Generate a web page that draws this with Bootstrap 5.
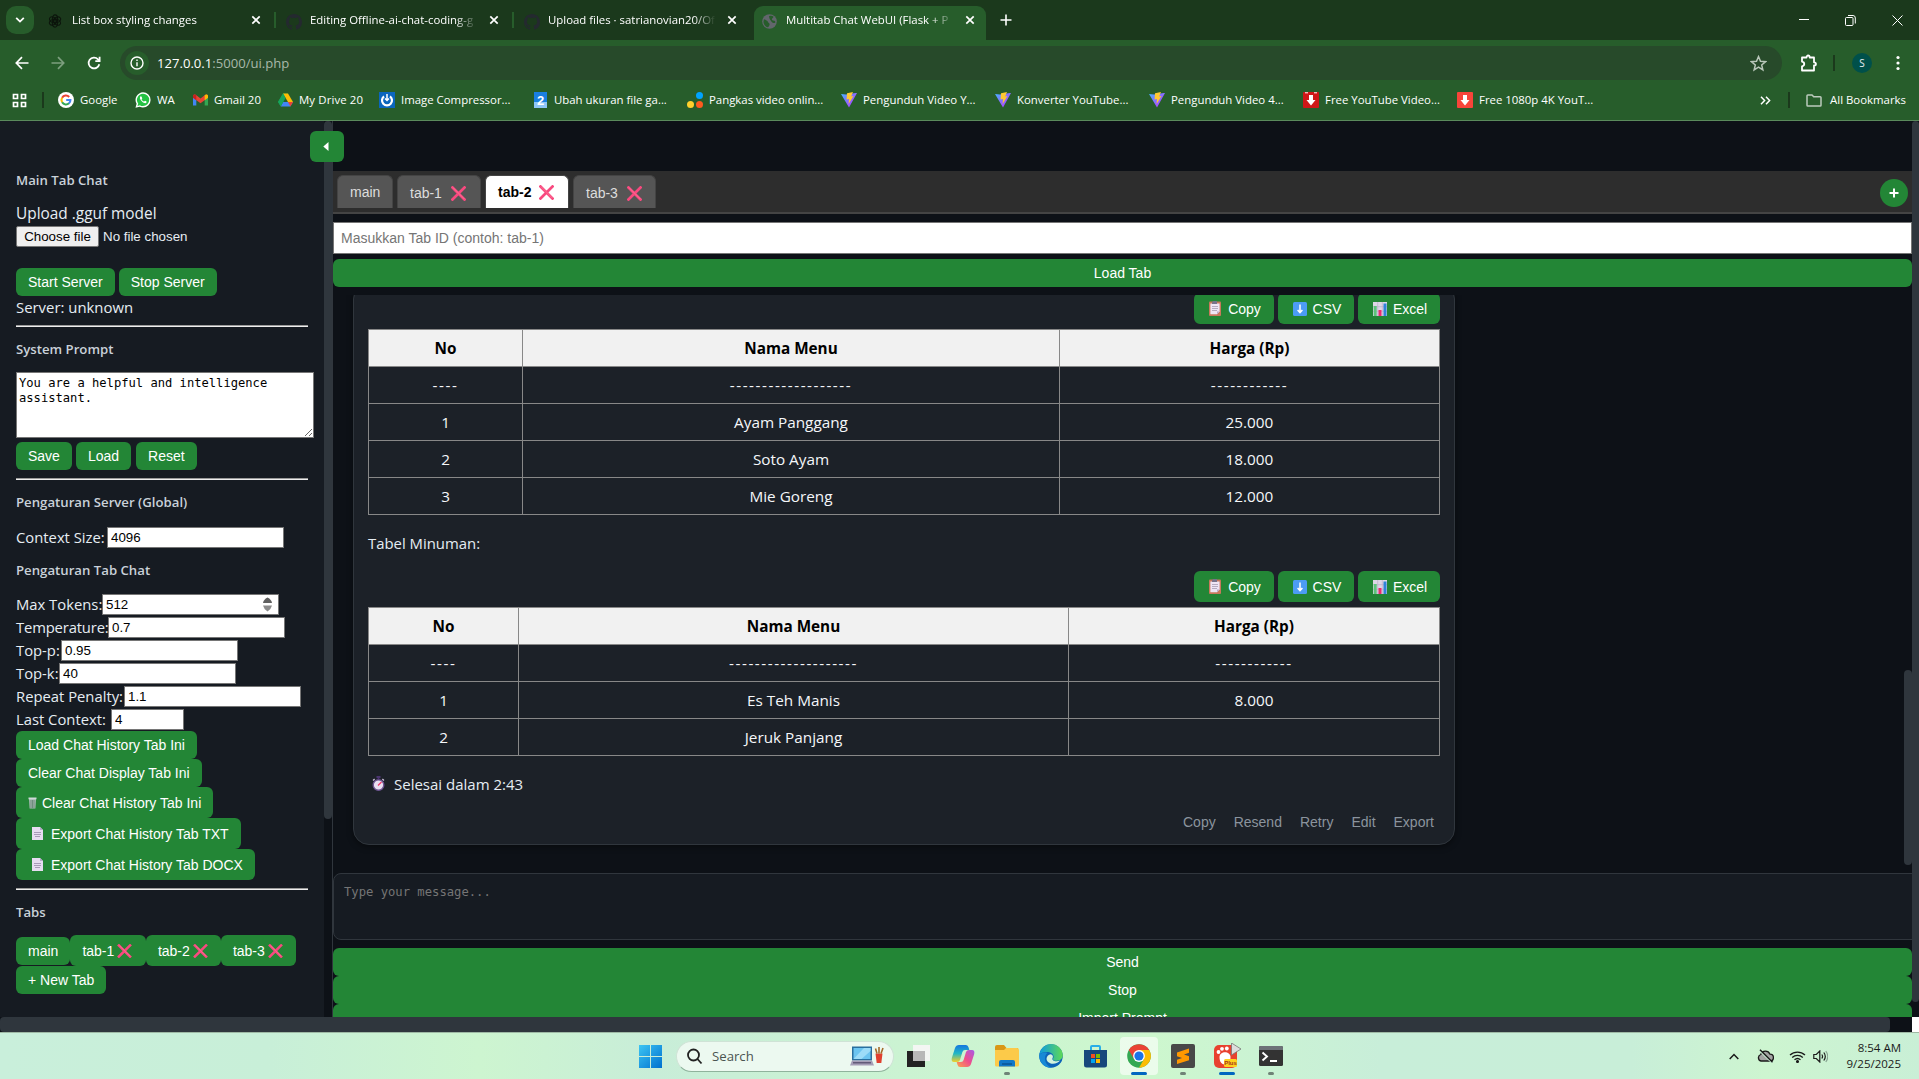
<!DOCTYPE html>
<html lang="id">
<head>
<meta charset="utf-8">
<meta name="viewport" content="width=device-width, initial-scale=1">
<title>Multitab Chat WebUI (Flask + PHP)</title>
<link href="https://cdn.jsdelivr.net/npm/bootstrap@5.3.0/dist/css/bootstrap.min.css" rel="stylesheet">
<style>
body{width:1919px;height:1079px;overflow:hidden;background:#0d1117;color:#e6edf3;font-family:"Open Sans","Noto Sans",sans-serif;font-size:15px;line-height:20px}
svg{display:block;flex:none}
button{font-family:"Liberation Sans",Arial,sans-serif}
/* browser frame */
.strip{height:40px;background:#1b391c;font-size:11.4px;color:#fff;padding-left:6px}
.drop{width:28px;height:28px;margin-top:6px;border-radius:10px;background:#275d2b}
.btab{width:238px;height:34px;margin-top:6px;padding-left:10px;position:relative}
.btab .ttl{width:171px;white-space:nowrap;overflow:hidden;-webkit-mask-image:linear-gradient(90deg,#000 85%,transparent 98%);mask-image:linear-gradient(90deg,#000 85%,transparent 98%)}
.btab .ic{width:16px;margin-right:8px}
.btab.sep:after{content:"";position:absolute;right:0;top:6px;width:2px;height:16px;background:#275d2b}
.btab.on:before{content:"";position:absolute;inset:0 4px 0 2px;background:#275d2b;border-radius:9px 9px 0 0}
.btab.on>*{position:relative}
.toolbar{height:40px;background:#275d2b}
.omni{width:1662px;height:34px;margin-top:6px;border-radius:17px;background:#274a2a;font-size:13.1px;color:#fff;padding:0 15px 0 5px}
.omni i{font-style:normal;color:#a9b9aa}
.info{width:24px;height:24px;border-radius:50%;background:#275d2b}
.marks{height:41px;background:#275d2b;border-bottom:1px solid #5a8a5c;font-size:11.4px;color:#fff;padding-left:12px}
.bm{white-space:nowrap;flex:none}
.bm svg{margin-right:6px}
.vsep{width:2px;height:16px;background:#1b391c}
.ava{width:20px;height:20px;border-radius:50%;background:#00504a;font-size:10px}
/* page */
.pagebox{height:896px;position:relative}
.side{width:324px;background:#161b22;padding:0 16px}
.strack{width:9px;background:#0d1117;border-right:1px solid #30363d}
.thumb{width:8px;background:#2f363d;border-radius:4px}
.gbtn{background:#238636;color:#fff;border:0;border-radius:6px;font-size:14px;line-height:16px;height:28px;padding:0 12px;white-space:nowrap;display:flex;align-items:center;justify-content:center}
.gbtn.tall{height:31px}
.toggle{position:absolute;left:310px;top:10px;width:34px;height:31px;padding:0;z-index:3}
.hd{font-size:13.2px;font-weight:600;color:#c9d1d9;line-height:20px;margin:0}
.rule{height:2px;background:#eee;border-top:1px solid #9a9a9a;width:292px}
.rowf{height:23px;display:flex;align-items:center;white-space:nowrap;font-size:14.8px}
.rowf>span{padding-bottom:2px}
.fld{width:177px;height:21px;border:1px solid #767676;background:#fff;color:#000;font:13.33px "Liberation Sans",Arial,sans-serif;padding:0 3px;border-radius:0;flex:none}
.choose{height:21px;width:83px;border:1px solid #767676;background:#efefef;color:#000;font-size:13.33px;padding:0;border-radius:2px;line-height:17px}
.sys{width:298px;height:66px;font:12.14px/15px "DejaVu Sans Mono",monospace;border:1px solid #767676;padding:3px 2px;background:#fff;color:#000;display:block}
.main{width:1579px;overflow:hidden}
.tbar{height:43px;background:#2d2d2d;border-bottom:2px solid #444;padding:4px 4px 4px;gap:4px}
.ctab{height:33px;background:#555;border:1px solid #444;border-bottom:0;border-radius:6px 6px 0 0;color:#ddd;font:14px "Liberation Sans",Arial,sans-serif;display:flex;align-items:center;padding:2px 12px 0;gap:9px}
.ctab.on{background:#fff;color:#000;font-weight:700;gap:8px}
.add{width:28px;height:28px;border-radius:50%;background:#238636}
.tabid{height:32px;margin-top:8px;border:1px solid #767676;background:#fff;padding:0 7px;font:14px "Liberation Sans",Arial,sans-serif;width:100%;display:block}
.tabid::placeholder{color:#757575}
.chat{height:570px;margin-top:8px;overflow:hidden;padding:0 0 20px 20px}
.msg{width:1102px;height:562px;background:#1c2128;border:1px solid #30363d;border-radius:16px;padding:9px 14px 0;box-shadow:0 2px 6px rgba(0,0,0,.4);flex:none}
.tbl{border-collapse:collapse;width:1072px;table-layout:fixed;text-align:center;margin-top:5px;font-size:15.3px}
.tbl th,.tbl td{border:1px solid #888;height:37px;padding:0;color:#f5f7fa}
.tbl .dash td{letter-spacing:1.52px}
.tbl th{background:#f1f1f1;color:#000;font-weight:700}
.acts{color:#8b949e;font:14px/16px "Liberation Sans",Arial,sans-serif;gap:18px}
.typ{height:67px;width:1590px;margin-top:8px;margin-bottom:8px;border:1px solid #30363d;border-radius:8px;background:#161b22;padding:10px 10px;font:12.2px/16px "DejaVu Sans Mono",monospace;resize:none;display:block}
.typ::placeholder{color:#757575}
.hbar{height:15px;background:#0d1117}
.task{height:47px;border-top:1px solid #9fb9a5;background:linear-gradient(90deg,#c9efdb 0,#c8efd8 14%,#cdf5d0 25%,#c8edd8 34%,#cbf3d2 47%,#cdf7ce 60%,#c8eed9 72%,#c8eed8 85%,#cdf5d0 92%,#c9efd6 100%);font-size:12px;color:#1a1a1a;padding-left:639px}
.srch{width:218px;height:31px;border-radius:16px;background:#ecf9f0;border:1px solid #cfe3d6;border-bottom-color:#8fb39c;font-size:14px;color:#4b5550;padding:0 9px}
.app{width:44px;height:46px;position:relative;display:flex;align-items:center;justify-content:center}
.app.on:before{content:"";position:absolute;inset:4px 3px 4px;border-radius:4px;background:rgba(255,255,255,.6)}
.app svg{position:relative}
.app.run:after{content:"";position:absolute;bottom:4px;left:19px;width:6px;height:3px;border-radius:2px;background:#6f8376}
.app.act:after{content:"";position:absolute;bottom:4px;left:14px;width:16px;height:3px;border-radius:2px;background:#0067c0}
.clock{font-size:11.5px;line-height:16px;text-align:right;width:72px}
</style>
<script src="https://cdn.jsdelivr.net/npm/bootstrap@5.3.0/dist/js/bootstrap.bundle.min.js"></script>
</head>
<body class="d-flex flex-column">
<svg width="0" height="0" class="position-absolute">
<defs>
<symbol id="x" viewBox="0 0 10 10"><path d="M1.3 1.3 8.7 8.7M8.7 1.3 1.3 8.7" stroke="#fff" stroke-width="1.7"/></symbol>
<symbol id="gh" viewBox="0 0 16 16"><path fill="#24292f" d="M8 0C3.58 0 0 3.58 0 8c0 3.54 2.29 6.53 5.47 7.59.4.07.55-.17.55-.38 0-.19-.01-.82-.01-1.49-2.01.37-2.53-.49-2.69-.94-.09-.23-.48-.94-.82-1.13-.28-.15-.68-.52-.01-.53.63-.01 1.08.58 1.23.82.72 1.21 1.87.87 2.33.66.07-.52.28-.87.51-1.07-1.78-.2-3.64-.89-3.64-3.95 0-.87.31-1.59.82-2.15-.08-.2-.36-1.02.08-2.12 0 0 .67-.21 2.2.82a7.6 7.6 0 0 1 4 0c1.53-1.04 2.2-.82 2.2-.82.44 1.1.16 1.92.08 2.12.51.56.82 1.27.82 2.15 0 3.07-1.87 3.75-3.65 3.95.29.25.54.73.54 1.48 0 1.07-.01 1.93-.01 2.2 0 .21.15.46.55.38A8 8 0 0 0 16 8c0-4.42-3.58-8-8-8"/></symbol>
<symbol id="cross" viewBox="0 0 15 15"><path d="M1.5 1.5 13.5 13.5M13.5 1.5 1.5 13.5" stroke="#f8497f" stroke-width="2.700" stroke-linecap="square"/><path d="M2 1.6 13.4 13" stroke="#ff6f93" stroke-width="1"/></symbol>
<linearGradient id="vg" x1="0" y1="0" x2="1" y2="1"><stop offset="0" stop-color="#41b8ff"/><stop offset=".5" stop-color="#8a6bff"/><stop offset="1" stop-color="#bd34fe"/></linearGradient>
<symbol id="vite" viewBox="0 0 16 16"><path d="M0 2 5 2.6 14.8.9 16 1 8 15.6Z" fill="url(#vg)"/><path d="M6 1.2 12 0 10.2 4.4 12.5 4 7.6 12 8 7 5.6 7.4Z" fill="#ffc832"/></symbol>
<symbol id="doc" viewBox="0 0 13 15"><path d="M1 1h8l3 3v10H1z" fill="#e6dcf1"/><path d="M9 1v3h3z" fill="#b8a8c9"/><path d="M3 6.5h7M3 8.5h7M4 10.5h5" stroke="#a79ab8"/></symbol>
<symbol id="clip" viewBox="0 0 12 15"><rect width="12" height="14.5" y=".5" rx="1" fill="#c9785c"/><path d="M1.4 2.5h9.2v8L8 13.2H1.4z" fill="#eee6f5"/><path d="M4 0h4v3H3V1.5z" fill="#77738a"/><path d="M3 5.5h6M3 7.5h6M3 9.5h5" stroke="#a79db3" stroke-width=".8"/><path d="M8 13.2v-2.7h2.6z" fill="#bcabc9"/></symbol>
<symbol id="dn" viewBox="0 0 14 14"><rect width="14" height="14" rx="1.5" fill="#4c9cf5"/><path d="M7 2.5v8M4.6 8 7 10.600 9.400 8" stroke="#fff" stroke-width="1.500" fill="none"/></symbol>
<symbol id="bars" viewBox="0 0 14 14"><rect width="14" height="14" fill="#ddd7e6"/><path d="M4.7 0v14M9.3 0v14M0 4.7h14M0 9.3h14" stroke="#b7aac6" stroke-width=".6"/><path d="M.7 4h3v10h-3z" fill="#5cc479"/><path d="M5.5 8h3v6h-3z" fill="#ee2a70"/><path d="M10.5 1.5h3V14h-3z" fill="#2f83d9"/></symbol>
</defs></svg>

<header>
<div class="strip d-flex">
 <div class="drop d-flex align-items-center justify-content-center"><svg width="10" height="8" viewBox="0 0 10 8"><path d="M1.2 1.8 5 5.6 8.8 1.8" fill="none" stroke="#fff" stroke-width="1.8"/></svg></div>
 <div style="width:4px"></div>
 <div class="btab sep d-flex pb-2 pt-1"><span class="ic pt-1"><svg width="14" height="14" viewBox="0 0 16 16" fill="none" stroke="#0c150c" stroke-width="1.2"><ellipse cx="8" cy="5.3" rx="3" ry="4.3"/><ellipse cx="8" cy="5.3" rx="3" ry="4.3" transform="rotate(60 8 8)"/><ellipse cx="8" cy="5.3" rx="3" ry="4.3" transform="rotate(120 8 8)"/><ellipse cx="8" cy="5.3" rx="3" ry="4.3" transform="rotate(180 8 8)"/><ellipse cx="8" cy="5.3" rx="3" ry="4.3" transform="rotate(240 8 8)"/><ellipse cx="8" cy="5.3" rx="3" ry="4.3" transform="rotate(300 8 8)"/></svg></span><span class="ttl">List box styling changes</span><svg class="ms-2 mt-1" width="10" height="12"><use href="#x"/></svg></div>
 <div class="btab sep d-flex pb-2 pt-1"><span class="ic pt-1"><svg width="16" height="16"><use href="#gh"/></svg></span><span class="ttl">Editing Offline-ai-chat-coding-g</span><svg class="ms-2 mt-1" width="10" height="12"><use href="#x"/></svg></div>
 <div class="btab d-flex pb-2 pt-1"><span class="ic pt-1"><svg width="16" height="16"><use href="#gh"/></svg></span><span class="ttl">Upload files · satrianovian20/Of</span><svg class="ms-2 mt-1" width="10" height="12"><use href="#x"/></svg></div>
 <div class="btab on d-flex pb-2 pt-1"><span class="ic pt-1"><svg width="15" height="15" viewBox="0 0 15 15"><circle cx="7.5" cy="7.5" r="7.3" fill="#62666c"/><path d="M2 5.2C4 6 5.5 6.5 6 8c.4 1.2 2 1 1.6 2.6C7.300 12 6.500 13.500 5.500 13.300 3.400 12.600 1.200 10 1.500 7.300ZM7 2.200c1.500-.6 3.500-.5 4.500.6-.2 1.500-1.300 1.300-1.600 2.300-.3 1.100 1 1.700 2.500 1.600.8.300 1 1 .9 1.800-1.400.9-3.300.6-3.900-.9C9 6.500 7.300 5.500 7 2.200Z" fill="#275d2b"/></svg></span><span class="ttl">Multitab Chat WebUI (Flask + P</span><svg class="ms-2 mt-1" width="10" height="12"><use href="#x"/></svg></div>
 <div class="d-flex align-items-center" style="padding-left:10px"><svg width="12" height="12" viewBox="0 0 12 12"><path d="M6 .5v11M.5 6h11" stroke="#fff" stroke-width="1.6"/></svg></div>
 <div class="d-flex align-items-center ms-auto" style="gap:36px;padding-right:16px">
  <svg width="10" height="10"><path d="M0 4.500h10" stroke="#fff"/></svg>
  <svg width="11" height="11" viewBox="0 0 11 11" fill="none" stroke="#fff"><rect x=".5" y="2.500" width="7.500" height="8" rx="1"/><path d="M3 .5h5A2.400 2.400 0 0 1 10.300 3v5.500"/></svg>
  <svg width="11" height="11"><path d="m.5.5 10 10m0-10-10 10" stroke="#fff"/></svg>
 </div>
</div>
<div class="toolbar d-flex align-items-start">
 <div class="d-flex align-items-center" style="height:46px;width:120px;padding-left:15px;gap:22px">
  <svg width="14" height="14" viewBox="0 0 14 14" fill="none" stroke="#fff" stroke-width="1.700"><path d="M13.500 7H1.500M7 1.200 1.300 7 7 12.800"/></svg>
  <svg width="14" height="14" viewBox="0 0 14 14" fill="none" stroke="#7d9f7f" stroke-width="1.700"><path d="M.5 7h12M7 1.200 12.700 7 7 12.800"/></svg>
  <svg width="14" height="14" viewBox="0 0 14 14" fill="none" stroke="#fff" stroke-width="1.800"><path d="M12.300 8.200A5.400 5.400 0 1 1 11 3.300l1.500 1.700"/><path d="M12.600.8v4.400H8.300"/></svg>
 </div>
 <div class="omni d-flex align-items-center">
  <span class="info d-flex align-items-center justify-content-center"><svg width="14" height="14" viewBox="0 0 14 14" fill="none" stroke="#fff" stroke-width="1.400"><circle cx="7" cy="7" r="6"/><path d="M7 6.200v4M7 3.500v1.500"/></svg></span>
  <span class="ms-2">127.0.0.1<i>:5000/ui.php</i></span>
  <svg class="ms-auto" width="17" height="17" viewBox="0 0 16 16" fill="none" stroke="#b9c7ba" stroke-width="1.400"><path d="m8 1.500 1.900 4.400 4.700.4-3.600 3.100 1.100 4.600L8 11.500 3.900 14 5 9.400 1.400 6.300l4.700-.4z"/></svg>
 </div>
 <div class="d-flex align-items-center flex-fill" style="height:46px;padding-left:18px">
  <svg width="18" height="18" viewBox="0 0 18 18" fill="none" stroke="#fff" stroke-width="1.800"><path d="M2 3.500h4.500c0-2.700 3.200-2.700 3.200 0H14v4.800c2.600 0 2.600 3.200 0 3.200v5H2v-4.200c3-.6 3-4 0-4.600z" stroke-linejoin="round"/></svg>
  <span class="vsep" style="margin-left:15px"></span>
  <span class="ava d-flex align-items-center justify-content-center" style="margin-left:17px">S</span>
  <svg style="margin-left:24px" width="4" height="16" fill="#fff"><circle cx="2" cy="2.500" r="1.600"/><circle cx="2" cy="8" r="1.600"/><circle cx="2" cy="13.500" r="1.600"/></svg>
 </div>
</div>
<div class="marks d-flex align-items-center">
 <svg width="15" height="15" viewBox="0 0 15 15" fill="none" stroke="#fff" stroke-width="1.700"><path d="M1.500 1.500h4v4h-4zM9.500 1.500h4v4h-4zM1.500 9.500h4v4h-4zM9.500 9.500h4v4h-4z"/></svg>
 <span class="vsep" style="margin:0 14px 0 15px"></span>
 <div class="bm d-flex align-items-center" style="width:77px"><svg width="16" height="16" viewBox="0 0 16 16"><circle cx="8" cy="8" r="8" fill="#fff"/><g fill="none" stroke-width="2.100"><path d="M4.100 5.700A4.500 4.500 0 0 1 11.200 4.900" stroke="#ea4335"/><path d="M4.100 10.300a4.600 4.600 0 0 1 0-4.600" stroke="#fbbc05"/><path d="M11 11.300a4.500 4.500 0 0 1-6.900-1" stroke="#34a853"/><path d="M8.200 8h4.200a4.400 4.400 0 0 1-1.500 3.400" stroke="#4285f4"/></g></svg>Google</div>
 <div class="bm d-flex align-items-center" style="width:58px"><svg width="16" height="16" viewBox="0 0 16 16"><path d="M8 .3A7.600 7.600 0 0 1 8 15.500 8 8 0 0 1 4.600 14.800L.5 15.800l1.100-4A7.600 7.600 0 0 1 8 .3Z" fill="#fff"/><path d="M8 1.700a6.200 6.200 0 0 1 0 12.400c-1.200 0-2.200-.3-3.100-.9l-2.400.7.700-2.300A6.200 6.200 0 0 1 8 1.700Z" fill="#25c244"/><path d="M5.700 4.300c-1.800 1.500-.2 3.700 1.300 5.200s3.700 2.500 4.500 1c.5-1-.9-1.400-1.500-1.700l-.9.800C8 9.200 7 8.200 6.600 7.200l.7-.8c-.3-.9-.7-2.300-1.600-2.100Z" fill="#fff"/></svg>WA</div>
 <div class="bm d-flex align-items-center" style="width:85px"><svg width="15" height="12" viewBox="0 0 15 12"><path d="M0 2v9.500h3.300V5z" fill="#4285f4"/><path d="M15 2v9.500h-3.300V5z" fill="#34a853"/><path d="M0 2C0 .5 1.700 0 2.700.8L7.500 4.600 12.300.8C13.300 0 15 .5 15 2v1.800L7.500 9.300 0 3.800z" fill="#ea4335"/><path d="M11.700 1.300C13 0 15 .5 15 2v1.800l-3.300 2.400z" fill="#fbbc04"/><path d="M3.300 1.300C2 0 0 .5 0 2v1.800l3.300 2.400z" fill="#c5221f"/></svg>Gmail 20</div>
 <div class="bm d-flex align-items-center" style="width:101px;letter-spacing:.12px"><svg width="15" height="14" viewBox="0 0 15 14"><path d="M5 .5h5L5.200 9 2.700 13 0 9z" fill="#0f9d58"/><path d="M5 .5h5L15 9h-5z" fill="#fbbc04"/><path d="M5.200 9H15l-2.600 4.500H2.700z" fill="#4285f4"/><path d="M5 .5 7.500 4.800 2.700 13.400 0 9z" fill="#17a55b"/><path d="M10 9h5l-2.600 4.500z" fill="#ea4335"/></svg>My Drive 20</div>
 <div class="bm d-flex align-items-center" style="width:154px"><svg width="16" height="16" viewBox="0 0 16 16"><rect width="16" height="16" fill="#0b66bd"/><path d="M5 4.400a5 5 0 1 0 6 0" fill="none" stroke="#fff" stroke-width="2.200"/><path d="M8 2v6M6 6.400 8 8.500l2-2.100" stroke="#fff" stroke-width="1.500" fill="none"/></svg>Image Compressor...</div>
 <div class="bm d-flex align-items-center" style="width:154px;padding-left:1px"><svg style="margin-right:7px" width="13" height="16" viewBox="0 0 13 16"><rect width="13" height="16" fill="#1a7fe0"/><rect y="10" width="13" height="6" fill="#8fc6f7"/><text x="6.500" y="13" font-size="13" font-weight="700" text-anchor="middle" fill="#fff" font-family="Liberation Sans,sans-serif">2</text></svg>Ubah ukuran file ga...</div>
 <div class="bm d-flex align-items-center" style="width:154px"><svg width="16" height="16" viewBox="0 0 16 16"><circle cx="12.500" cy="3.500" r="3.500" fill="#00a3ff"/><circle cx="3.500" cy="12.500" r="3.500" fill="#ffd02c"/><circle cx="12.500" cy="12.500" r="3.500" fill="#ff5a1f"/></svg>Pangkas video onlin...</div>
 <div class="bm d-flex align-items-center" style="width:154px"><svg width="16" height="16"><use href="#vite"/></svg>Pengunduh Video Y...</div>
 <div class="bm d-flex align-items-center" style="width:154px"><svg width="16" height="16"><use href="#vite"/></svg>Konverter YouTube...</div>
 <div class="bm d-flex align-items-center" style="width:154px"><svg width="16" height="16"><use href="#vite"/></svg>Pengunduh Video 4...</div>
 <div class="bm d-flex align-items-center" style="width:154px"><svg width="16" height="16" viewBox="0 0 16 16"><rect width="16" height="16" rx="1" fill="#cf1717"/><path d="M2 .8h3M11 .8h3" stroke="#fff"/><path d="M6 3h4v5h2.500L8 13.500 3.500 8H6z" fill="#fff"/></svg>Free YouTube Video...</div>
 <div class="bm d-flex align-items-center" style="width:154px"><svg width="16" height="16" viewBox="0 0 16 16"><rect width="16" height="16" rx="1" fill="#f8443a"/><path d="M6 3h4v5h2.500L8 13.500 3.500 8H6z" fill="#fff"/></svg>Free 1080p 4K YouT...</div>
 <div class="d-flex align-items-center ms-auto" style="padding-right:13px"><svg width="11" height="9" viewBox="0 0 11 9" fill="none" stroke="#fff" stroke-width="1.500"><path d="m1 .8 3.600 3.700L1 8.200M6 .8l3.600 3.700L6 8.200"/></svg><span class="vsep" style="margin:0 16px 0 17px"></span><svg style="margin-right:8px" width="16" height="13" viewBox="0 0 16 13"><path d="M1 11.200V1.800q0-.8.8-.8H6l1.700 1.800h6.500q.8 0 .8.800v7.600q0 .8-.8.8H1.800q-.8 0-.8-.8Z" fill="none" stroke="#bccabd" stroke-width="1.500"/></svg><span>All Bookmarks</span></div>
</div>
</header>

<div class="pagebox d-flex">
 <button class="gbtn toggle"><svg style="margin-right:2px" width="6" height="9"><path d="M5.500 0v9L.3 4.500z" fill="#fff"/></svg></button>
 <aside class="side flex-shrink-0">
  <h6 class="hd" style="padding-top:49px">Main Tab Chat</h6>
  <div style="margin-top:14px;height:22px;line-height:20px;font-size:15.4px">Upload .gguf model</div>
  <div class="d-flex align-items-center"><button class="choose">Choose file</button><span class="ms-1" style="font:13.33px 'Liberation Sans'">No file chosen</span></div>
  <div class="d-flex" style="gap:4px;margin-top:21px"><button class="gbtn">Start Server</button><button class="gbtn">Stop Server</button></div>
  <div style="height:29px;line-height:23px;font-size:14.9px">Server: unknown</div>
  <div class="rule"></div>
  <h6 class="hd" style="margin-top:12px;margin-bottom:13px">System Prompt</h6>
  <textarea class="sys" spellcheck="false">You are a helpful and intelligence assistant.</textarea>
  <div class="d-flex" style="gap:4px;margin-top:4px;margin-bottom:8px"><button class="gbtn">Save</button><button class="gbtn">Load</button><button class="gbtn" style="margin-left:1px">Reset</button></div>
  <div class="rule"></div>
  <h6 class="hd" style="margin-top:12px;margin-bottom:14px">Pengaturan Server (Global)</h6>
  <div class="rowf"><span style="width:91px">Context Size:</span><input class="fld" value="4096"></div>
  <h6 class="hd" style="margin-top:11px;margin-bottom:13px">Pengaturan Tab Chat</h6>
  <div class="rowf"><span style="width:86px">Max Tokens:</span><input class="fld" value="512"><svg style="margin-left:-16px" width="9" height="15"><path d="M0 6Q.5 2.500 4.500.5 8.500 2.500 9 6z" fill="#606060"/><path d="M0 8.500h9Q8 12.500 4.500 14.500 1 12.500 0 8.500z" fill="#8b8b8b"/></svg></div>
  <div class="rowf"><span style="width:92px;letter-spacing:-.15px">Temperature:</span><input class="fld" value="0.7"></div>
  <div class="rowf"><span style="width:45px">Top-p:</span><input class="fld" value="0.95"></div>
  <div class="rowf"><span style="width:43px">Top-k:</span><input class="fld" value="40"></div>
  <div class="rowf"><span style="width:108px">Repeat Penalty:</span><input class="fld" value="1.1"></div>
  <div class="rowf"><span style="width:95px">Last Context:</span><input class="fld" style="width:73px" value="4"></div>
  <div class="d-flex flex-column align-items-start" style="margin-bottom:8px">
   <button class="gbtn">Load Chat History Tab Ini</button>
   <button class="gbtn">Clear Chat Display Tab Ini</button>
   <button class="gbtn tall"><svg style="margin-right:5px" width="9" height="13" viewBox="0 0 9 13"><path d="M1 3h7l-.6 9.500H1.600z" fill="#a9b9b5"/><path d="M.5 1.500h8v1.800h-8z" fill="#cfd9d8"/><path d="M3 4v8M4.500 4v8M6 4v8" stroke="#567a66" stroke-width=".7"/></svg>Clear Chat History Tab Ini</button>
   <button class="gbtn tall"><svg style="margin:0 7px 0 3px" width="13" height="15"><use href="#doc"/></svg>Export Chat History Tab TXT</button>
   <button class="gbtn tall"><svg style="margin:0 7px 0 3px" width="13" height="15"><use href="#doc"/></svg>Export Chat History Tab DOCX</button>
  </div>
  <div class="rule"></div>
  <h6 class="hd" style="margin-top:12px;margin-bottom:13px">Tabs</h6>
  <div class="d-flex align-items-center"><button class="gbtn">main</button><button class="gbtn tall" style="width:76px">tab-1<svg style="margin:0 2px 0 3px" width="15" height="14"><use href="#cross"/></svg></button><button class="gbtn tall" style="width:75px">tab-2<svg style="margin:0 2px 0 3px" width="15" height="14"><use href="#cross"/></svg></button><button class="gbtn tall" style="width:75px">tab-3<svg style="margin:0 2px 0 3px" width="15" height="14"><use href="#cross"/></svg></button></div>
  <button class="gbtn">+ New Tab</button>
 </aside>
 <div class="strack flex-shrink-0"><div class="thumb" style="height:698px"></div></div>
 <main class="main flex-shrink-0">
  <div style="height:50px"></div>
  <div class="tbar d-flex align-items-start">
   <div class="ctab pt-0" style="width:56px">main</div>
   <div class="ctab" style="width:84px">tab-1 <svg width="15" height="15"><use href="#cross"/></svg></div>
   <div class="ctab on pt-0" style="width:84px">tab-2 <svg width="15" height="15"><use href="#cross"/></svg></div>
   <div class="ctab" style="width:83px">tab-3 <svg width="15" height="15"><use href="#cross"/></svg></div>
   <div class="add ms-auto d-flex align-items-center justify-content-center mt-1"><svg width="10" height="10"><path d="M5 .5v9M.5 5h9" stroke="#fff" stroke-width="2"/></svg></div>
  </div>
  <input class="tabid" placeholder="Masukkan Tab ID (contoh: tab-1)">
  <button class="gbtn w-100" style="margin-top:5px">Load Tab</button>
  <div class="d-flex">
   <section class="chat flex-fill d-flex flex-column justify-content-end">
    <article class="msg">
     <div class="d-flex justify-content-end" style="gap:4px">
      <button class="gbtn tall" style="width:80px"><svg style="margin:0 7px 0 2px" width="12" height="15"><use href="#clip"/></svg>Copy</button><button class="gbtn tall" style="width:76px"><svg style="margin:0 6px 0 2px" width="14" height="14"><use href="#dn"/></svg>CSV</button><button class="gbtn tall" style="width:82px"><svg style="margin:0 6px 0 2px" width="14" height="14"><use href="#bars"/></svg>Excel</button>
     </div>
     <table class="tbl"><colgroup><col style="width:154px"><col style="width:537px"><col></colgroup>
      <tr><th>No</th><th>Nama Menu</th><th>Harga (Rp)</th></tr>
      <tr class="dash"><td>----</td><td>-------------------</td><td>------------</td></tr>
      <tr><td>1</td><td>Ayam Panggang</td><td>25.000</td></tr>
      <tr><td>2</td><td>Soto Ayam</td><td>18.000</td></tr>
      <tr><td>3</td><td>Mie Goreng</td><td>12.000</td></tr>
     </table>
     <div style="margin-top:18px;margin-bottom:18px;font-size:14.9px">Tabel Minuman:</div>
     <div class="d-flex justify-content-end" style="gap:4px">
      <button class="gbtn tall" style="width:80px"><svg style="margin:0 7px 0 2px" width="12" height="15"><use href="#clip"/></svg>Copy</button><button class="gbtn tall" style="width:76px"><svg style="margin:0 6px 0 2px" width="14" height="14"><use href="#dn"/></svg>CSV</button><button class="gbtn tall" style="width:82px"><svg style="margin:0 6px 0 2px" width="14" height="14"><use href="#bars"/></svg>Excel</button>
     </div>
     <table class="tbl"><colgroup><col style="width:150px"><col style="width:550px"><col></colgroup>
      <tr><th>No</th><th>Nama Menu</th><th>Harga (Rp)</th></tr>
      <tr class="dash"><td>----</td><td>--------------------</td><td>------------</td></tr>
      <tr><td>1</td><td>Es Teh Manis</td><td>8.000</td></tr>
      <tr><td>2</td><td>Jeruk Panjang</td><td></td></tr>
     </table>
     <div class="d-flex align-items-center" style="margin-top:18px;padding-left:4px"><svg style="margin-right:9px" width="13" height="16" viewBox="0 0 13 16"><circle cx="6.500" cy="9" r="5.300" fill="#e9e0f2" stroke="#6c5390" stroke-width="1.400"/><path d="M4.500 1h4M6.500 1v2.500" stroke="#4b3570" stroke-width="1.800"/><path d="M1 4.500 2.600 3M12 4.500 10.400 3" stroke="#cfc2de" stroke-width="1.200"/><path d="m6 9.500 3.500-3.500" stroke="#f4366b" stroke-width="1.300"/></svg>Selesai dalam 2:43</div>
     <div class="acts d-flex justify-content-end" style="margin-top:20px;padding-right:6px"><span>Copy</span><span>Resend</span><span>Retry</span><span>Edit</span><span>Export</span></div>
    </article>
   </section>
   <div style="padding-top:383px"><div class="thumb" style="height:195px"></div></div>
  </div>
  <textarea class="typ" placeholder="Type your message..."></textarea>
  <button class="gbtn w-100">Send</button>
  <button class="gbtn w-100">Stop</button>
  <button class="gbtn w-100">Import Prompt</button>
 </main>
 <div style="width:7px"><div class="thumb w-100" style="height:881px"></div></div>
</div>
<div class="hbar d-flex position-relative"><div style="width:1890px;background:#2f363d;border-radius:4px"></div><div class="ms-auto bg-white" style="width:7px"></div></div>

<footer class="task d-flex align-items-center">
 <svg width="23" height="23"><defs><linearGradient id="wg" x1="0" y1="0" x2="1" y2="1"><stop offset="0" stop-color="#3cc5f3"/><stop offset="1" stop-color="#0070cf"/></linearGradient></defs><path d="M0 0h11v11H0zM12 0h11v11H12zM0 12h11v11H0zM12 12h11v11H12z" fill="url(#wg)"/></svg>
 <div class="srch d-flex align-items-center" style="margin:0 3px 0 14px"><svg width="17" height="17" viewBox="0 0 17 17" fill="none" stroke="#222" stroke-width="1.800"><circle cx="7.500" cy="7" r="5.500"/><path d="m11.500 11 4 4.500"/></svg><span style="margin-left:9px;font-size:13.2px">Search</span>
  <svg class="ms-auto" width="34" height="22" viewBox="0 0 34 22"><path d="M2 1.500h20v14H2z" fill="#2a6f9f"/><path d="M3.500 3h17v11h-17z" fill="#6cc4f0"/><path d="M3.500 14 14 3h6.500v3l-9 8z" fill="#9ddcf8"/><path d="M2 15.500h20l2 5H0z" fill="#a59eb6"/><path d="M3 17h18v1.500H3z" fill="#625b78"/><path d="M25.500 8.500h7l-1.200 9.500h-4.600z" fill="#e0402f"/><path d="m27 8.500-1.500-5M29 8.500V2M31 8.500 33 3" stroke="#a46a2a" stroke-width="1.600"/></svg></div>
 <div class="app"><svg width="24" height="22"><path d="M0 6h18v16H0z" fill="#222"/><path d="M6 0h17v16H6z" fill="#f5f5f5" opacity=".93"/><path d="M6 6h12v10H6z" fill="#b8b8b8"/></svg></div>
 <div class="app"><svg width="24" height="22" viewBox="0 0 24 22"><defs><linearGradient id="c1" x1="0" y1="0" x2="0" y2="1"><stop offset="0" stop-color="#1476e0"/><stop offset=".5" stop-color="#22b7c4"/><stop offset="1" stop-color="#f2cf2a"/></linearGradient><linearGradient id="c2" x1="1" y1="0" x2="0" y2="1"><stop offset="0" stop-color="#a65ae8"/><stop offset=".5" stop-color="#ef4e8b"/><stop offset="1" stop-color="#fca34b"/></linearGradient></defs><path d="M8 0h7q2 0 2.600 2.500L18.300 5H14q-2 0-2.600 2L9 15q-.7 2-3 2H3Q0 17 .8 13L4 3q1-3 4-3z" fill="url(#c1)"/><path d="M16 22H9q-2 0-2.600-2.500L5.700 17H10q2 0 2.600-2L15 7q.7-2 3-2h3q3 0 2.200 4L20 19q-1 3-4 3z" fill="url(#c2)"/></svg></div>
 <div class="app run"><svg width="24" height="22"><path d="M0 2Q0 0 2 0h7l2.500 3H23v5H0z" fill="#d99715"/><path d="M0 5h9l2-2h11q2 0 2 2v15q0 1.500-1.500 1.500h-21Q0 21.500 0 20z" fill="#fcca49"/><path d="M4 21.500V17q0-2 2-2h12q2 0 2 2v4.500z" fill="#1278c8"/><path d="M7 19h10" stroke="#0b5596" stroke-width="1.500"/></svg></div>
 <div class="app"><svg width="24" height="24" viewBox="0 0 24 24"><defs><linearGradient id="e1" x1="0" y1="0" x2="1" y2="0"><stop offset="0" stop-color="#0c9ae0"/><stop offset="1" stop-color="#5fda55"/></linearGradient></defs><circle cx="12" cy="12" r="11.800" fill="#0d63b8"/><path d="M.3 10.500A11.800 11.800 0 0 1 23.800 11c.2 4-3 6-6.500 5.800-2.600-.2-4-1.400-3-2.800C15.500 12 13.500 8.500 9.500 8 5 7.500 1.500 9 .3 10.500Z" fill="url(#e1)"/><path d="M7.500 15c0-2.500 2-4.500 4-4.800 2.300.3 3 2.300 2 4-1 2 2.500 4 7.500 2.300-2 3.500-12 5.500-13.500-1.500Z" fill="#d2f3dd"/><path d="M8.500 9C4 12 5.500 21.500 13 23.700 5 24.500 0 18 .3 11.500 1.500 9 5 8 8.500 9Z" fill="#1789d6"/></svg></div>
 <div class="app"><svg width="23" height="23"><path d="M7 5V2q0-1 1-1h7q1 0 1 1v3" fill="none" stroke="#27aee8" stroke-width="2"/><path d="M0 5h23v15q0 2.500-2.500 2.500h-18Q0 22.500 0 20z" fill="#17477c"/><path d="M7 9h4v4H7z" fill="#f25022"/><path d="M12 9h4v4h-4z" fill="#7fba00"/><path d="M7 14h4v4H7z" fill="#00a4ef"/><path d="M12 14h4v4h-4z" fill="#ffb900"/></svg></div>
 <div class="app on act"><svg width="24" height="24" viewBox="0 0 24 24"><circle cx="12" cy="12" r="11.800" fill="#34a853"/><path d="M12 12 1.800 6A11.800 11.800 0 0 1 22.200 6z" fill="#ea4335"/><path d="M12 6h10.200A11.800 11.800 0 0 1 12 23.800L17 15z" fill="#fbbc04"/><path d="M1.800 6 7 15l5-3-2-6z" fill="#ea4335"/><circle cx="12" cy="12" r="5.900" fill="#fff"/><circle cx="12" cy="12" r="4.600" fill="#1a73e8"/></svg></div>
 <div class="app run"><svg width="24" height="24"><rect width="24" height="24" rx="2" fill="#484848"/><path d="M6 8.500 18 4.500v4.300l-5 1.700 5 1.700v4L6 20v-4.300l5-1.700-5-1.700z" fill="#ff9800"/></svg></div>
 <div class="app act"><svg width="28" height="26" viewBox="0 0 28 26"><rect x="1" y="2" width="23" height="23" rx="5" fill="#e8412f"/><circle cx="5.500" cy="9" r="1.900" fill="#fff"/><circle cx="9" cy="5.800" r="1.900" fill="#fff"/><circle cx="13.800" cy="5.500" r="1.900" fill="#fff"/><path d="M6.500 14c0-6.500 11-6.500 11 0s-2 7.500-5 7.500-6-1.500-6-7.500Z" fill="#fff"/><rect x="11" y="16" width="13" height="8" rx="1.500" fill="#ffd21e"/><text x="17.500" y="22.400" font-size="6" font-weight="700" text-anchor="middle" fill="#a3361d" font-family="Liberation Sans,sans-serif">Plus</text><path d="m18.500 0 9.500 6-9.500 6z" fill="#ddd" stroke="#777" stroke-width=".8"/></svg></div>
 <div class="app run"><svg width="24" height="20"><rect width="24" height="20" rx="1.500" fill="#333"/><path d="M0 1.500Q0 0 1.500 0h21Q24 0 24 1.500V4H0z" fill="#6d7278"/><path d="m3.500 6.500 4.500 4-4.500 4M11 15h7" fill="none" stroke="#fff" stroke-width="1.900"/></svg></div>
 <div class="d-flex align-items-center ms-auto" style="padding-right:18px">
  <svg width="10" height="7"><path d="m.7 6 4.300-4.500L9.300 6" fill="none" stroke="#1a1a1a" stroke-width="1.500"/></svg>
  <svg style="margin-left:18px" width="17" height="14" viewBox="0 0 17 14"><path d="M4 12a3.400 3.400 0 0 1-.3-6.500A5 5 0 0 1 13 5.200 3.400 3.400 0 0 1 13 12z" fill="#a3a3a3" stroke="#1a1a1a" stroke-width="1.300"/><path d="m2.500 1.800 13 12.400" stroke="#c9efd6" stroke-width="1.500"/><path d="m3 .8 12.500 12.400" stroke="#1a1a1a" stroke-width="1.400"/></svg>
  <svg style="margin-left:15px" width="17" height="13" viewBox="0 0 17 13" fill="none" stroke="#1a1a1a" stroke-width="1.300"><path d="M1 5a11 11 0 0 1 15 0M3.200 7.500a7.600 7.600 0 0 1 10.600 0M5.500 9.800a4.500 4.500 0 0 1 6 0"/><circle cx="8.500" cy="11.500" r=".9" fill="#1a1a1a"/></svg>
  <svg style="margin-left:7px;margin-right:1px" width="15" height="13" viewBox="0 0 15 13" fill="none" stroke="#1a1a1a" stroke-width="1.200"><path d="M.8 4.500h2.500L6.800 1v11L3.300 8.500H.8zM8.800 4.500q1.500 2 0 4M10.800 2.500q3 4 0 8"/><path d="M12.800 1q4 5.500 0 11" stroke="#8aa693"/></svg>
  <div class="clock">8:54 AM<br>9/25/2025</div>
 </div>
</footer>
</body>
</html>
